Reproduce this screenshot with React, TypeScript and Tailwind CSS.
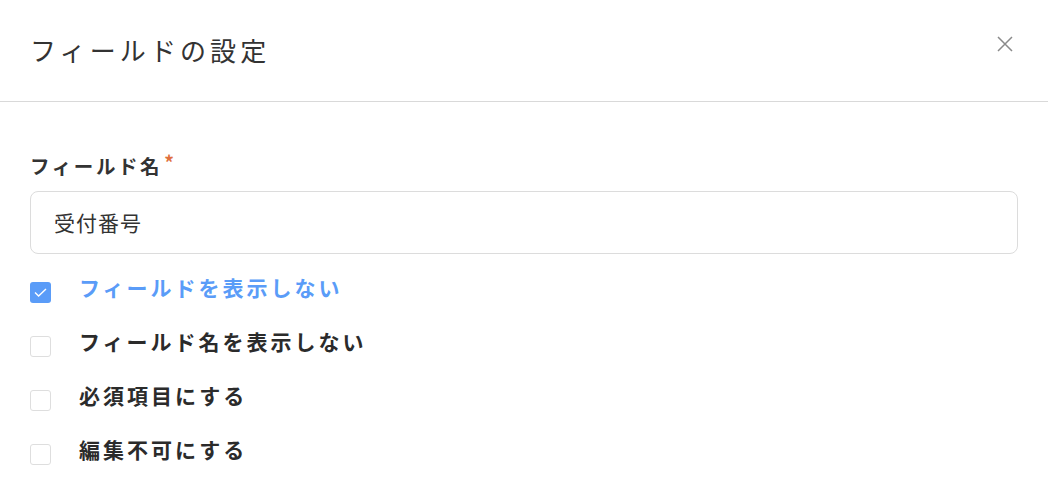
import React, { useState } from "react";

const font = { fontFamily: '"Noto Sans CJK JP", "Noto Sans", sans-serif' };

const options = [
  "フィールドを表示しない",
  "フィールド名を表示しない",
  "必須項目にする",
  "編集不可にする",
];

export default function App() {
  const [checked, setChecked] = useState<boolean[]>([true, false, false, false]);

  const toggle = (i: number) => {
    setChecked((prev) => prev.map((v, j) => (j === i ? !v : v)));
  };

  return (
    <div className="w-[1048px] h-[490px] bg-white overflow-hidden text-[#333]" style={font}>
      {/* header */}
      <div className="h-[102px] flex items-center justify-between pl-[30px] pr-[34px] border-b border-[#d9d9d9]">
        <div className="text-[26px] tracking-[4.1px] text-[#333] leading-none -mt-[2px]">フィールドの設定</div>
        <button className="text-[#8a8a8a] -mt-[14px]">
          <svg width="18" height="18" viewBox="0 0 18 18" fill="none" stroke="currentColor" strokeWidth="1.5">
            <path d="M2 2 L16 16 M16 2 L2 16" />
          </svg>
        </button>
      </div>

      {/* body */}
      <div className="px-[30px] pt-[51px]">
        <div className="flex items-start">
          <span className="text-[19.5px] font-bold tracking-[2.6px] leading-[26px]">フィールド名</span>
          <span className="text-[#e0703e] text-[19px] font-bold leading-none ml-[2px] -mt-[1px]">*</span>
        </div>
        <div className="mt-[12px] w-[988px] h-[63px] border border-[#dcdcdc] rounded-[8px] flex items-center px-[23px]">
          <span className="text-[21px] tracking-[1px] text-[#333]">受付番号</span>
        </div>

        <div className="mt-[23px] flex flex-col gap-[32px]">
          {options.map((label, i) => (
            <label key={label} className="flex items-center h-[22px] cursor-pointer" onClick={() => toggle(i)}>
              <span
                className={
                  checked[i]
                    ? "w-[21px] h-[21px] rounded-[3px] bg-[#5a9cf8] flex items-center justify-center mt-[9px]"
                    : "w-[21px] h-[21px] rounded-[3px] border border-[#dedede] bg-white mt-[9px]"
                }
              >
                {checked[i] && (
                  <svg width="15" height="15" viewBox="0 0 15 15" fill="none" stroke="white" strokeWidth="1.4">
                    <path d="M2 7.6 L5.6 11 L13 4" />
                  </svg>
                )}
              </span>
              <span
                className={
                  "ml-[28px] text-[21px] font-bold tracking-[3px] leading-none -mt-[1px] " +
                  (checked[i] ? "text-[#5a9cf8]" : "text-[#2b2b2b]")
                }
              >
                {label}
              </span>
            </label>
          ))}
        </div>
      </div>
    </div>
  );
}
